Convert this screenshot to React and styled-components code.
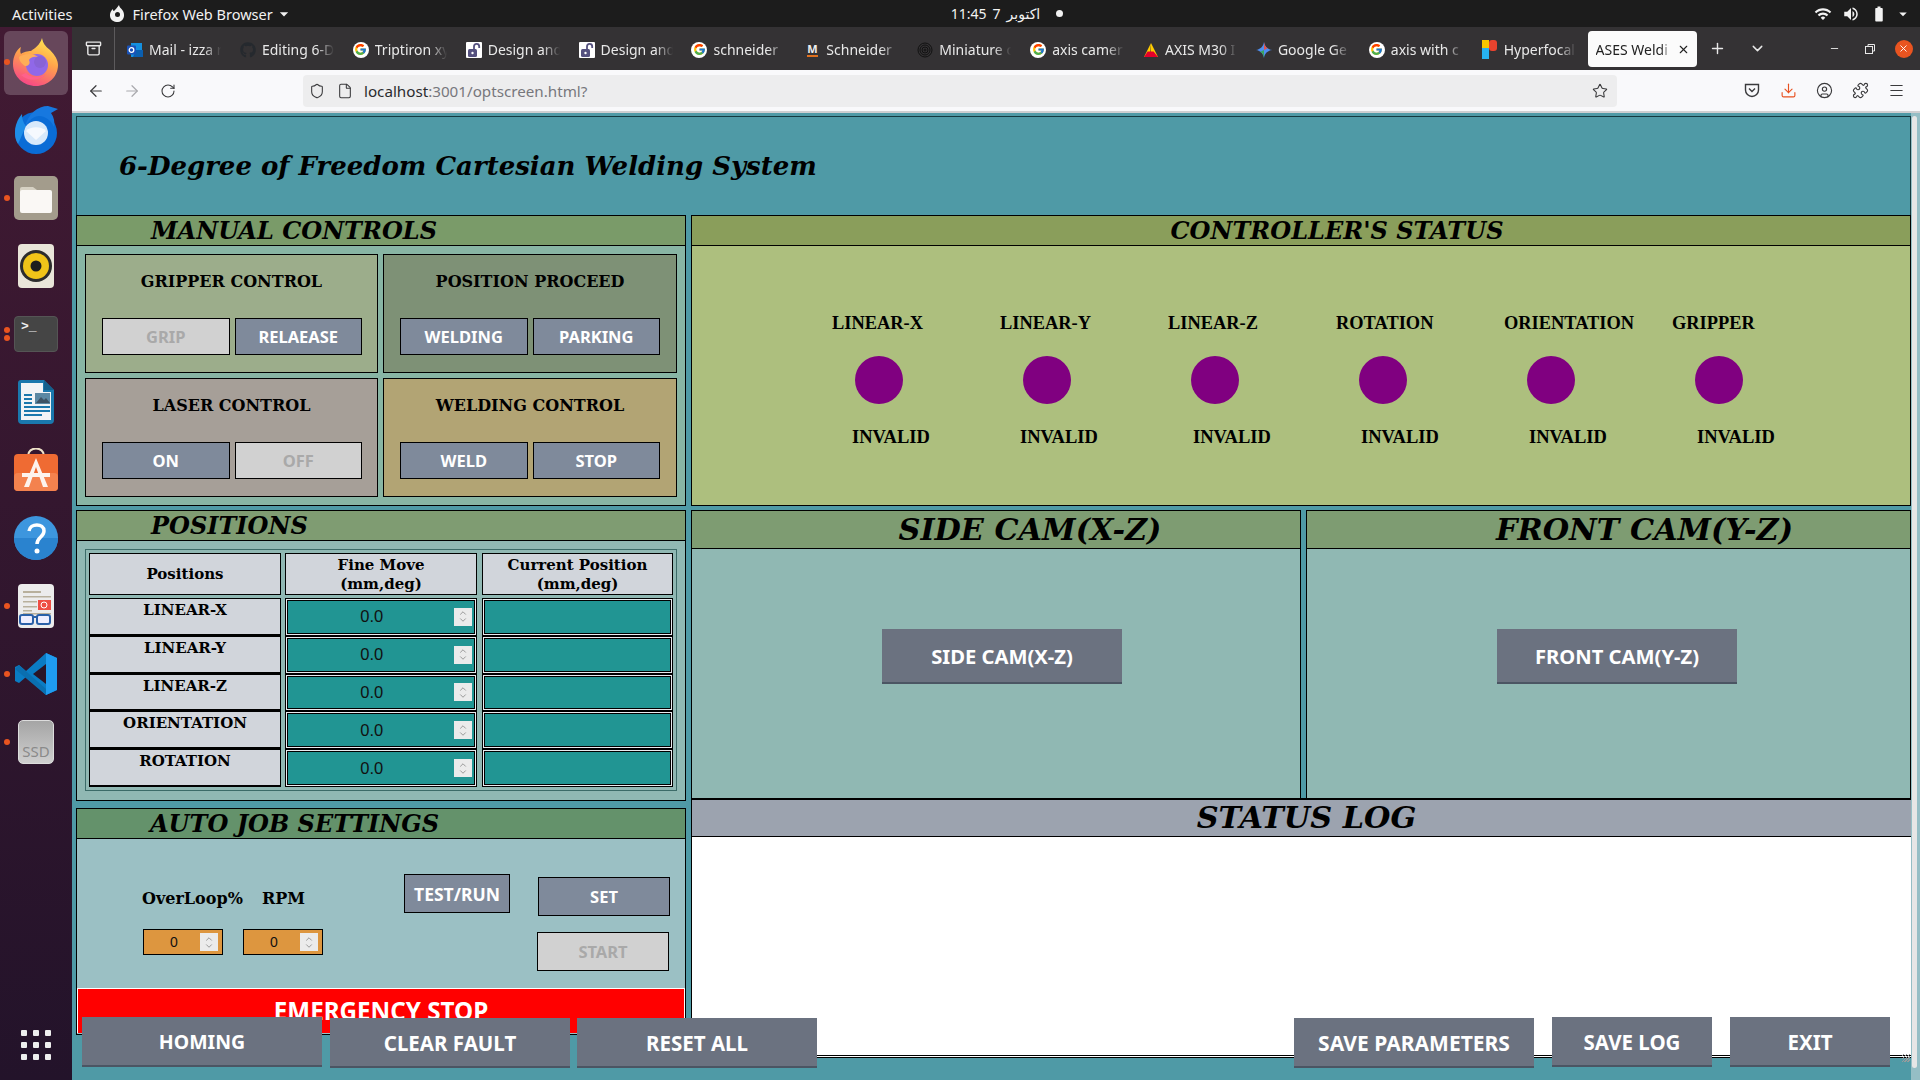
import React from "react";
import styled, { createGlobalStyle } from "styled-components";
import { ArrowLeft, ArrowRight, RotateCw, Shield, File, Star, Download, CircleUser, Puzzle, Menu, Plus, ChevronDown, ChevronUp, X, Minus, Archive } from "lucide-react";
import { FaGithub } from "react-icons/fa";
import { FcGoogle } from "react-icons/fc";
import { MdWifi, MdVolumeUp, MdBatteryStd, MdArrowDropDown } from "react-icons/md";

const SERIF = '"DejaVu Serif", serif';
const TIMES = '"Liberation Serif", serif';
const UI = '"Noto Sans", "DejaVu Sans", sans-serif';

const Global = createGlobalStyle`
  html, body { margin: 0; padding: 0; width: 1920px; height: 1080px; overflow: hidden; background: #4f9aa6; }
  * { box-sizing: border-box; }
`;

const Desktop = styled.div`display:flex;flex-direction:column;width:1920px;height:1080px;overflow:hidden;`;
const TopBar = styled.header`height:27px;background:#1c1c1c;color:#f2f2f2;font:14.5px ${UI};display:grid;grid-template-columns:1fr auto 1fr;align-items:center;padding:0 8px 0 12px;`;
const TopLeft = styled.div`display:flex;align-items:center;`;
const AppMenu = styled.div`display:flex;align-items:center;gap:6px;margin-left:37px;`;
const Clock = styled.div`display:flex;align-items:center;gap:6px;font-size:14px;margin-left:90px;`;
const ClockDot = styled.span`width:7px;height:7px;border-radius:50%;background:#f2f2f2;margin-left:10px;`;
const TopRight = styled.div`display:flex;justify-content:flex-end;align-items:center;gap:6px;`;
const Work = styled.div`display:flex;flex:1;min-height:0;`;

const Dock = styled.nav`width:72px;flex:none;background:linear-gradient(#421a33,#23132a);display:flex;flex-direction:column;padding-top:1px;padding-bottom:20px;`;
const DockSlot = styled.div`position:relative;height:68px;flex:none;display:flex;align-items:center;justify-content:center;`;
const DockTile = styled.div`position:absolute;left:4px;right:4px;top:3px;bottom:1px;border-radius:6px;background:rgba(255,255,255,.2);`;
const RunDot = styled.span`position:absolute;left:4px;top:${p => p.$top}px;width:6px;height:6px;border-radius:50%;background:#e95420;`;
const AppGrid = styled.div`margin-top:auto;align-self:center;display:grid;grid-template-columns:repeat(3,6px);grid-auto-rows:6px;gap:6px;`;
const AppGridDot = styled.span`background:#eee;border-radius:1px;`;

const Browser = styled.div`flex:1;min-width:0;display:flex;flex-direction:column;`;
const TabBar = styled.div`height:43px;flex:none;background:#343234;color:#e8e8e8;display:flex;align-items:center;font:14px ${UI};`;
const TabsButton = styled.div`width:43px;height:43px;flex:none;display:flex;align-items:center;justify-content:center;border-right:1px solid #5d5b5d;`;
const Tab = styled.div`width:112.9px;flex:none;display:flex;align-items:center;gap:6px;padding:2px 0 0 12px;white-space:nowrap;overflow:hidden;`;
const TabIcon = styled.span`width:16px;height:16px;flex:none;display:flex;align-items:center;justify-content:center;`;
const TabText = styled.span`width:76px;overflow:hidden;-webkit-mask-image:linear-gradient(90deg,#000 72%,transparent 95%);mask-image:linear-gradient(90deg,#000 72%,transparent 95%);`;
const ActiveTab = styled.div`width:109px;height:36px;margin-left:5px;flex:none;background:#fbfbfb;color:#222;border-radius:4px;display:flex;align-items:center;justify-content:space-between;padding:2px 7px 0 8px;`;
const ActiveText = styled.span`width:76px;overflow:hidden;white-space:nowrap;-webkit-mask-image:linear-gradient(90deg,#000 85%,transparent);mask-image:linear-gradient(90deg,#000 85%,transparent);`;
const TabTool = styled.div`display:flex;align-items:center;justify-content:center;width:${p => p.$w}px;margin-left:${p => p.$ml || 0}px;`;
const CloseCircle = styled.span`width:18px;height:18px;border-radius:50%;background:#e95420;display:flex;align-items:center;justify-content:center;margin-left:15px;`;

const NavBar = styled.div`height:41px;flex:none;background:#f9f9fb;display:flex;align-items:center;color:#3a3a3c;`;
const NavBtn = styled.div`width:36px;display:flex;justify-content:center;color:${p => p.$c || "#3a3a3c"};`;
const UrlBar = styled.div`margin-left:117px;width:1314px;height:32px;background:#ededee;border-radius:4px;display:flex;align-items:center;padding:0 8px 0 6px;font:15.2px ${UI};`;
const UrlIcon = styled.span`display:flex;margin-right:${p => p.$mr}px;`;
const UrlHost = styled.span`color:#2b2b2f;`;
const UrlRest = styled.span`color:#77777c;flex:1;`;
const NavEnd = styled.div`display:flex;margin-left:117px;`;

const Page = styled.main`position:relative;flex:1;min-height:0;overflow:hidden;background:#4f9aa6;border-top:2px solid #cfcfd1;padding:3px 9px 0 4px;`;
const Banner = styled.div`height:99px;border:1px solid #153a40;border-bottom:0;display:flex;align-items:center;padding:0 0 0 42px;`;
const Title = styled.h1`margin:0;font:italic 700 26px ${SERIF};color:#000;`;
const Columns = styled.div`display:grid;grid-template-columns:610px 1fr;column-gap:5px;`;
const Column = styled.div`display:flex;flex-direction:column;`;
const Panel = styled.section`border:1px solid #000;height:${p => p.$h}px;margin-top:${p => p.$mt || 0}px;background:${p => p.$bg};display:flex;flex-direction:column;overflow:hidden;`;
const PanelHead = styled.h2`margin:0;flex:none;height:${p => p.$h || 30}px;background:${p => p.$bg};border-bottom:1px solid #000;font:italic 700 ${p => p.$size || 24}px/${p => (p.$h || 30) - 1}px ${SERIF};color:#000;text-align:${p => p.$center ? "center" : "left"};padding-left:${p => p.$pl || 0}px;white-space:nowrap;`;

const ManualBody = styled.div`flex:1;display:grid;grid-template-columns:293px 294px;grid-auto-rows:119px;gap:5px;padding:8px 0 0 8px;`;
const Group = styled.div`border:1px solid #000;background:${p => p.$bg};padding:15px 16px 0;`;
const GroupTitle = styled.div`font:700 16px/24px ${SERIF};color:#000;text-align:center;margin-bottom:24px;white-space:nowrap;`;
const BtnRow = styled.div`display:grid;grid-template-columns:127.5px 127.5px;gap:5px;`;
const Btn = styled.button`display:block;padding:0;margin:${p => p.$m || 0};width:${p => p.$w ? p.$w + "px" : "100%"};height:${p => p.$h || 37}px;border:1px solid #000;background:${p => p.$off ? "#d1d1d1" : "#7f8a9b"};color:${p => p.$off ? "#a9a9a9" : "#fff"};font:700 ${p => p.$size || 16.5}px ${UI};text-transform:uppercase;`;

const PosBody = styled.div`flex:1;padding:8px 0 0 8px;`;
const PosTable = styled.div`width:592px;height:242px;border:1px solid #3c6b68;padding:3px;display:grid;grid-template-columns:192px 193px 191px;column-gap:4px;grid-template-rows:42px repeat(5,37.8px);`;
const HeadCell = styled.div`border:1px solid #000;background:#d1d5db;height:42px;padding-top:1px;margin-right:${p => p.$mid ? 1 : 0}px;font:700 15px/19px ${SERIF};color:#000;text-align:center;display:flex;align-items:center;justify-content:center;`;
const RowLabel = styled.div`border:1px solid #000;border-bottom-width:2px;background:#d1d5db;font:700 15px/22px ${SERIF};color:#000;text-align:center;transform:translateY(3px);`;
const ValueCell = styled.div`border:1px solid #000;background:#e8eaee;padding:1px;margin-right:${p => p.$mid ? 1 : 0}px;transform:translateY(3px);`;
const TealField = styled.div`height:100%;border:1px solid #000;background:#219593;display:flex;align-items:center;font:16.5px "Liberation Sans",sans-serif;color:#111;`;
const FieldValue = styled.span`flex:1;text-align:center;padding-left:${p => p.$pl}px;`;
const Spin = styled.span`width:18px;height:18px;background:#ebebeb;display:flex;flex-direction:column;align-items:center;justify-content:center;margin-right:${p => p.$mr}px;color:#9a9a9a;flex:none;`;
const SpinGlyph = styled.span`display:flex;height:7px;align-items:center;`;

const AutoBody = styled.div`height:148px;flex:none;background:#9bc0c4;display:flex;align-items:flex-start;padding-left:66px;`;
const AutoFields = styled.div`width:261px;padding-top:50px;`;
const AutoLabels = styled.div`display:flex;font:700 16px/20px ${SERIF};color:#000;height:20px;margin-left:-1px;`;
const AutoLabel = styled.span`width:${p => p.$w}px;`;
const AutoInputs = styled.div`display:flex;gap:20px;margin-top:20px;`;
const OrangeField = styled.div`width:80px;height:26px;border:1px solid #000;background:#dd963f;display:flex;align-items:center;font:14px "Liberation Sans",sans-serif;color:#111;`;
const AutoAction = styled.div`display:flex;flex-direction:column;margin-left:28px;padding-top:38px;`;
const Emergency = styled.button`flex:none;height:45px;margin:1px 0 0;padding:0 0 2px;width:auto;border:1px solid #fff;border-bottom:0;background:#f00;color:#fff;font:700 24.2px ${UI};`;

const Leds = styled.div`flex:1;display:flex;padding:67px 0 0 140px;`;
const Led = styled.div`width:168px;flex:none;display:flex;flex-direction:column;`;
const LedLabel = styled.span`font:700 18.4px/20px ${TIMES};color:#000;height:20px;white-space:nowrap;`;
const LedDot = styled.span`width:48px;height:48px;border-radius:50%;background:#800080;margin:23px 0 23px 23px;`;
const LedState = styled.span`font:700 18.5px/20px ${TIMES};color:#000;margin-left:${p => p.$ml}px;`;

const CamRow = styled.div`display:grid;grid-template-columns:610px 605px;column-gap:5px;height:288px;margin-top:4px;`;
const Cam = styled.section`border:1px solid #000;border-bottom:0;background:#90b8b3;display:flex;flex-direction:column;`;
const CamBody = styled.div`flex:1;display:flex;align-items:flex-start;padding:80px 0 0 ${p => p.$pl}px;`;
const BigBtn = styled.button`width:${p => p.$w}px;height:${p => p.$h}px;padding:1px 0 0;border:0;border-bottom:2px solid #4b5563;background:#6b7280;color:#fff;font:700 ${p => p.$size}px ${UI};margin-top:${p => p.$mt || 0}px;margin-left:${p => p.$ml || 0}px;flex:none;`;
const Log = styled.section`border-top:2px solid #000;border-left:1px solid #000;height:260px;display:flex;flex-direction:column;background:#fff;border-bottom:3px double #000;`;
const LogHead = styled.h2`margin:0;flex:none;height:37px;background:#9ca3af;border-bottom:1px solid #000;font:italic 700 30.3px/35px ${SERIF};color:#000;text-align:center;padding-left:10px;`;
const LogBody = styled.div`flex:1;background:#fff;`;

const Overlay = styled.div`position:absolute;left:10px;right:30px;top:904px;display:flex;`;
const Spacer = styled.div`flex:1;`;
const ScrollTrack = styled.div`position:absolute;right:0;top:0;bottom:0;width:9px;background:rgba(235,235,235,.45);`;
const ScrollThumb = styled.div`position:absolute;left:1px;right:3px;top:3px;bottom:12px;background:#e6e6e6;border-radius:3px;`;
const Grip = styled.div`position:absolute;right:10px;top:941px;width:8px;height:8px;background:repeating-linear-gradient(135deg,transparent 0 1px,#9a9a9a 1px 2px);`;
const GoogleBadge = styled.span`display:flex;background:#fff;border-radius:50%;width:16px;height:16px;align-items:center;justify-content:center;`;
const TopGlyph = styled.span`display:flex;margin-left:${p => p.$ml || 0}px;`;
const CaretNudge = styled.span`display:flex;margin-left:-5px;`;
const NavLead = styled.span`width:6px;flex:none;`;

const G = () => <GoogleBadge><FcGoogle size={13} /></GoogleBadge>;
const Outlook = () => <svg width="16" height="16" viewBox="0 0 16 16"><path d="M4 1h11v14H4z" fill="#1490df" /><path d="M9 8h7v7H6z" fill="#0a5fb0" /><rect y="3.5" width="9" height="9" rx="1" fill="#1a52b8" /><circle cx="4.5" cy="8" r="2.3" fill="none" stroke="#fff" strokeWidth="1.3" /></svg>;
const Lock = () => <svg width="16" height="16" viewBox="0 0 16 16"><rect width="16" height="16" rx="1" fill="#fff" /><rect x="2" y="7" width="9" height="8" rx="1.5" fill="#55517f" /><path d="M8 7V4.5a2.6 2.6 0 0 1 5.2 0V6" fill="none" stroke="#55517f" strokeWidth="1.8" /><circle cx="6.5" cy="11" r="1.2" fill="#fff" /></svg>;
const Spiral = () => <svg width="16" height="16" viewBox="0 0 16 16" fill="none" stroke="#111" strokeWidth="1"><circle cx="8" cy="8" r="7" /><circle cx="8" cy="8" r="5" /><circle cx="8" cy="8" r="3" /><circle cx="8" cy="8" r="1" /></svg>;
const Axis = () => <svg width="16" height="16" viewBox="0 0 16 16"><path d="M8 1l7 14H9.5L8 11z" fill="#ffcc00" /><path d="M8 1L1 15h6z" fill="#ffcc00" /><path d="M4.6 9.5h6L15 15H1z" fill="#e3002b" /></svg>;
const Gemini = () => <svg width="16" height="16" viewBox="0 0 16 16"><path d="M8 0c.6 4.4 3.6 7.4 8 8-4.4.6-7.4 3.6-8 8-.6-4.4-3.6-7.4-8-8 4.4-.6 7.4-3.6 8-8z" fill="#4f8ef0" /><path d="M8 0c.5 4 2.500 6 4 6L8 8z" fill="#e5534b" /><path d="M8 16c-.5-4-2.500-6-4-6l4-2z" fill="#3ba55d" /></svg>;
const Hyper = () => <svg width="16" height="20" viewBox="0 0 16 20"><rect x="0" width="7" height="8" fill="#f7c600" /><rect x="7" width="8" height="11" rx="3" fill="#e8432e" /><rect x="0" y="8" width="7" height="12" fill="#27b2f0" /></svg>;
const SchneiderM = styled.span`font:700 11px ${UI};color:#eee;line-height:12px;border-bottom:2px solid #e0701e;`;

const tabs = [
  [<Outlook />, "Mail - izza r"],
  [<FaGithub size={16} color="#25292e" />, "Editing 6-D"],
  [<G />, "Triptiron xy"],
  [<Lock />, "Design and"],
  [<Lock />, "Design and"],
  [<G />, "schneider"],
  [<SchneiderM>M</SchneiderM>, "Schneider"],
  [<Spiral />, "Miniature c"],
  [<G />, "axis camer"],
  [<Axis />, "AXIS M30 I"],
  [<Gemini />, "Google Ge"],
  [<G />, "axis with c"],
  [<Hyper />, "Hyperfocal"],
];

const Firefox = () => <svg width="48" height="48" viewBox="0 0 48 48"><defs><linearGradient id="ff1" x1="0.7" y1="0" x2="0.3" y2="1"><stop offset="0" stopColor="#ffe226" /><stop offset=".45" stopColor="#ff8a1f" /><stop offset="1" stopColor="#f5156c" /></linearGradient></defs><path d="M30 0c1 5 3 8 8 12 5 5 8 10 8 15 0 12-10 21-22 21S1 39 1 26C1 18 5 11 9 9c-1 3-1 5 0 7 2-2 7-3 10-3 4-3 9-6 11-13z" fill="url(#ff1)" /><circle cx="25" cy="27" r="11" fill="#7543e3" /><circle cx="28" cy="24" r="6" fill="#6b3dcc" /><path d="M7 19c4-3 14-5 19 0-5-1-8 1-9 3 2 4-1 6-4 6-3-2-6-5-6-9z" fill="#ff9a2e" /><path d="M14 35c4 5 14 5 20 1-6 7-18 8-25 1 2-1 3-1 5-2z" fill="#ff3a6e" /></svg>;
const Thunder = () => <svg width="48" height="48" viewBox="0 0 48 48"><circle cx="24" cy="27" r="21" fill="#0a6cd6" /><path d="M10 8C5 14 3 20 3 27c0 4 1 8 3 11l8-18C11 17 10 12 10 8z" fill="#1f8ee8" /><path d="M13 22C15 8 26 0 36 0l10 3-7 4c3 4 4 9 3 14-3-7-9-11-15-11-6 0-11 5-14 12z" fill="#1778df" /><circle cx="24" cy="27" r="12" fill="#d7e9fb" /><path d="M14 25c4-5 16-5 20 0l-10 9z" fill="#f5f9fe" /></svg>;
const Files = () => <svg width="44" height="44" viewBox="0 0 44 44"><rect width="44" height="44" rx="5" fill="#a39c8c" /><path d="M6 13a2 2 0 0 1 2-2h11l4 3v4H6z" fill="#d6d1c3" /><rect x="6" y="14" width="32" height="23" rx="2" fill="#faf8f5" /></svg>;
const Rhythm = () => <svg width="36" height="44" viewBox="0 0 36 44"><rect width="36" height="44" rx="4" fill="#e9e5d9" /><circle cx="18" cy="22" r="16" fill="#2c2c2c" /><circle cx="18" cy="22" r="13" fill="#f0c419" /><circle cx="18" cy="22" r="5.500" fill="#1e1e1e" /></svg>;
const TermPrompt = styled.span`position:absolute;left:6px;top:2px;font:700 13px "Liberation Mono",monospace;color:#eee;`;
const TermBox = styled.div`position:relative;width:44px;height:36px;border-radius:4px;background:#454545;border:1px solid #555;`;
const Writer = () => <svg width="36" height="44" viewBox="0 0 36 44"><path d="M3 0h23l10 10v30a4 4 0 0 1-4 4H4a4 4 0 0 1-4-4V3a3 3 0 0 1 3-3z" fill="#1a78ad" /><path d="M3 3h22v9h8v28H3z" fill="#f2f4f6" /><path d="M26 0l10 10H26z" fill="#135f8b" /><path d="M6 14h8v2H6zM6 18h8v2H6zM6 22h8v2H6zM6 26h26v2H6zM6 30h26v2H6zM6 34h18v2H6z" fill="#1a78ad" /><rect x="17" y="13" width="15" height="11" fill="#5b88a3" /><path d="M18 23l5-6 3 3 2-2 4 5z" fill="#3e5364" /></svg>;
const Store = () => <svg width="44" height="44" viewBox="0 0 44 44"><path d="M14 8c0-10 16-10 16 0" fill="none" stroke="#eee2c8" strokeWidth="2" /><rect y="6" width="44" height="37" rx="4" fill="#ef6b33" /><rect y="25" width="44" height="18" rx="4" fill="#f4824e" /><path d="M22 10l-12 29h5l7-20 7 20h5z" fill="#fdf3ed" /><rect x="8" y="25" width="28" height="4" fill="#fdf3ed" /></svg>;
const Help = () => <svg width="44" height="44" viewBox="0 0 44 44"><circle cx="22" cy="22" r="22" fill="#3d96de" /><path d="M0 22a22 22 0 0 0 44 0z" fill="#2a83cf" /><path d="M15 15c1-8 15-8 15 0 0 6-7 6-7 13" fill="none" stroke="#fff" strokeWidth="3.500" /><circle cx="23" cy="35" r="2.500" fill="#fff" /></svg>;
const Reader = () => <svg width="36" height="44" viewBox="0 0 36 44"><rect width="36" height="44" rx="4" fill="#ececec" /><path d="M5 7h18v2H5zM5 12h28v1.500H5zM5 17h14v1.500H5zM5 22h14v1.500H5zM5 26h9v1.500H5zM5 29h28v1.500H5z" fill="#b8b09c" /><rect x="20" y="16" width="13" height="10" fill="#ee4d43" /><circle cx="26" cy="21" r="3" fill="none" stroke="#fff" /><rect x="2" y="31" width="13" height="9" rx="2" fill="#eef" stroke="#2a60a8" strokeWidth="2" /><rect x="19" y="31" width="13" height="9" rx="2" fill="#eef" stroke="#2a60a8" strokeWidth="2" /><path d="M15 33h4" stroke="#2a60a8" strokeWidth="2" /></svg>;
const VSCode = () => <svg width="42" height="42" viewBox="0 0 42 42"><path d="M31 0l11 5v32l-11 5-20-18-7 6-4-2v-14l4-2 7 6z" fill="#0a7cc4" /><path d="M31 0l11 5v32l-11 5z" fill="#1f9cf0" /><path d="M31 11L18 21l13 10z" fill="#2a1527" /><path d="M4 12l27 24v6L0 16z" fill="#0a6fb0" /></svg>;
const SsdBox = styled.div`width:36px;height:44px;border-radius:5px;background:linear-gradient(#a5a5a5,#cfcfcf);border:1px solid #ddd;display:flex;align-items:flex-end;justify-content:center;font:15px ${UI};color:#8a8a8a;padding-bottom:2px;`;

const dock = [
  { el: <Firefox />, tile: true, dots: [31] },
  { el: <Thunder /> },
  { el: <Files />, dots: [31] },
  { el: <Rhythm /> },
  { el: <TermBox><TermPrompt>&gt;_</TermPrompt></TermBox>, dots: [27, 35] },
  { el: <Writer /> },
  { el: <Store /> },
  { el: <Help /> },
  { el: <Reader />, dots: [31] },
  { el: <VSCode />, dots: [31] },
  { el: <SsdBox>SSD</SsdBox>, dots: [31] },
];

const SpinBox = ({ mr }) => (
  <Spin $mr={mr}>
    <SpinGlyph><ChevronUp size={10} strokeWidth={2.4} /></SpinGlyph>
    <SpinGlyph><ChevronDown size={10} strokeWidth={2.4} /></SpinGlyph>
  </Spin>
);

const groups = [
  ["GRIPPER CONTROL", "#9cad8b", ["Grip", true], ["Relaease", false]],
  ["POSITION PROCEED", "#7e9176", ["Welding", false], ["Parking", false]],
  ["LASER CONTROL", "#a69f98", ["On", false], ["Off", true]],
  ["WELDING CONTROL", "#b2a474", ["Weld", false], ["Stop", false]],
];
const rows = ["LINEAR-X", "LINEAR-Y", "LINEAR-Z", "ORIENTATION", "ROTATION"];
const leds = [["LINEAR-X", 20], ["LINEAR-Y", 20], ["LINEAR-Z", 25], ["ROTATION", 25], ["ORIENTATION", 25], ["GRIPPER", 25]];
const bar = 20.5;

export default function App() {
  return (
    <Desktop>
      <Global />
      <TopBar>
        <TopLeft>
          Activities
          <AppMenu>
            <svg width="17" height="17" viewBox="0 0 17 17"><path d="M10 0c0 2 2 3 4 6 2 4 1 8-2 10-3 2-8 1-10-2C0 11 1 6 4 4c0 1 0 2 1 2 1-1 3-3 5-6z" fill="#f2f2f2" /><circle cx="8.500" cy="9.500" r="2.500" fill="#1c1c1c" /></svg>
            Firefox Web Browser
            <CaretNudge><MdArrowDropDown size={20} /></CaretNudge>
          </AppMenu>
        </TopLeft>
        <Clock>
          <span>11:45</span><span>7</span><span>اکتوبر</span>
          <ClockDot />
        </Clock>
        <TopRight>
          <MdWifi size={18} /><TopGlyph $ml={4}><MdVolumeUp size={18} /></TopGlyph><TopGlyph $ml={4}><MdBatteryStd size={18} /></TopGlyph><MdArrowDropDown size={18} />
        </TopRight>
      </TopBar>
      <Work>
        <Dock>
          {dock.map((d, i) => (
            <DockSlot key={i}>
              {d.tile && <DockTile />}
              {(d.dots || []).map(t => <RunDot key={t} $top={t} />)}
              {d.el}
            </DockSlot>
          ))}
          <AppGrid>{Array.from({ length: 9 }, (_, i) => <AppGridDot key={i} />)}</AppGrid>
        </Dock>
        <Browser>
          <TabBar>
            <TabsButton><Archive size={17} color="#e8e8e8" /></TabsButton>
            {tabs.map(([icon, label], i) => (
              <Tab key={i}><TabIcon>{icon}</TabIcon><TabText>{label}</TabText></Tab>
            ))}
            <ActiveTab><ActiveText>ASES Weldi</ActiveText><X size={13} /></ActiveTab>
            <TabTool $w={28} $ml={7}><Plus size={17} /></TabTool>
            <TabTool $w={28} $ml={12}><ChevronDown size={17} /></TabTool>
            <TabTool $w={20} $ml={53}><Minus size={11} /></TabTool>
            <TabTool $w={20} $ml={15}><svg width="10" height="10" viewBox="0 0 10 10" fill="none" stroke="#e8e8e8"><rect x=".5" y="2.500" width="7" height="7" /><path d="M3 2.500V.5h6.500V7H8" /></svg></TabTool>
            <CloseCircle><X size={11} color="#fff" /></CloseCircle>
          </TabBar>
          <NavBar>
            <NavLead />
            <NavBtn><ArrowLeft size={18} strokeWidth={1.6} /></NavBtn>
            <NavBtn $c="#a9a9ad"><ArrowRight size={18} strokeWidth={1.6} /></NavBtn>
            <NavBtn><RotateCw size={16} strokeWidth={1.6} /></NavBtn>
            <UrlBar>
              <UrlIcon $mr={12}><Shield size={16} strokeWidth={1.6} /></UrlIcon>
              <UrlIcon $mr={11}><File size={16} strokeWidth={1.6} /></UrlIcon>
              <UrlHost>localhost</UrlHost><UrlRest>:3001/optscreen.html?</UrlRest>
              <UrlIcon $mr={1}><Star size={16} strokeWidth={1.6} /></UrlIcon>
            </UrlBar>
            <NavEnd>
              <NavBtn><svg width="16" height="16" viewBox="0 0 16 16" fill="none" stroke="#3a3a3c" strokeWidth="1.4"><path d="M1.500 2.500h13V8a6.500 6.500 0 0 1-13 0z" /><path d="M5 6.500l3 3 3-3" /></svg></NavBtn>
              <NavBtn $c="#e8501f"><Download size={17} strokeWidth={1.6} /></NavBtn>
              <NavBtn><CircleUser size={17} strokeWidth={1.6} /></NavBtn>
              <NavBtn><Puzzle size={17} strokeWidth={1.6} /></NavBtn>
              <NavBtn><Menu size={17} strokeWidth={1.6} /></NavBtn>
            </NavEnd>
          </NavBar>
          <Page>
            <Banner><Title>6-Degree of Freedom Cartesian Welding System</Title></Banner>
            <Columns>
              <Column>
                <Panel $h={291} $bg="#88b5a4">
                  <PanelHead $bg="#7a9b69" $pl={74}>MANUAL CONTROLS</PanelHead>
                  <ManualBody>
                    {groups.map(([title, bg, a, b]) => (
                      <Group key={title} $bg={bg}>
                        <GroupTitle>{title}</GroupTitle>
                        <BtnRow>
                          <Btn $off={a[1]}>{a[0]}</Btn>
                          <Btn $off={b[1]}>{b[0]}</Btn>
                        </BtnRow>
                      </Group>
                    ))}
                  </ManualBody>
                </Panel>
                <Panel $h={291} $mt={4} $bg="#90b8b3">
                  <PanelHead $bg="#7f9c72" $pl={74}>POSITIONS</PanelHead>
                  <PosBody>
                    <PosTable>
                      <HeadCell>Positions</HeadCell>
                      <HeadCell $mid>Fine Move<br />(mm,deg)</HeadCell>
                      <HeadCell>Current Position<br />(mm,deg)</HeadCell>
                      {rows.map(r => (
                        <React.Fragment key={r}>
                          <RowLabel>{r}</RowLabel>
                          <ValueCell $mid><TealField><FieldValue $pl={1.5}>0.0</FieldValue><SpinBox mr={2} /></TealField></ValueCell>
                          <ValueCell><TealField /></ValueCell>
                        </React.Fragment>
                      ))}
                    </PosTable>
                  </PosBody>
                </Panel>
                <Panel $h={227} $mt={7} $bg="#9bc0c4">
                  <PanelHead $bg="#64926b" $pl={73}>AUTO JOB SETTINGS</PanelHead>
                  <AutoBody>
                    <AutoFields>
                      <AutoLabels><AutoLabel $w={120}>OverLoop%</AutoLabel><AutoLabel $w={60}>RPM</AutoLabel></AutoLabels>
                      <AutoInputs>
                        <OrangeField><FieldValue $pl={4}>0</FieldValue><SpinBox mr={4} /></OrangeField>
                        <OrangeField><FieldValue $pl={4}>0</FieldValue><SpinBox mr={4} /></OrangeField>
                      </AutoInputs>
                    </AutoFields>
                    <Btn $w={106} $h={39} $size={17.5} $m="35px 0 0">Test/Run</Btn>
                    <AutoAction>
                      <Btn $w={132} $h={39}>Set</Btn>
                      <Btn $w={132} $h={39} $off $m="16px 0 0 -1px">Start</Btn>
                    </AutoAction>
                  </AutoBody>
                  <Emergency>EMERGENCY STOP</Emergency>
                </Panel>
              </Column>
              <Column>
                <Panel $h={291} $bg="#adbf7e">
                  <PanelHead $bg="#8a9e5b" $center $pl={72}>CONTROLLER'S STATUS</PanelHead>
                  <Leds>
                    {leds.map(([n, ml]) => (
                      <Led key={n}>
                        <LedLabel>{n}</LedLabel>
                        <LedDot />
                        <LedState $ml={ml}>INVALID</LedState>
                      </Led>
                    ))}
                  </Leds>
                </Panel>
                <CamRow>
                  <Cam>
                    <PanelHead $h={38} $size={30.3} $bg="#7e9c72" $center $pl={68}>SIDE CAM(X-Z)</PanelHead>
                    <CamBody $pl={190}><BigBtn $w={240} $h={55} $size={20.2}>SIDE CAM(X-Z)</BigBtn></CamBody>
                  </Cam>
                  <Cam>
                    <PanelHead $h={38} $size={30.3} $bg="#7e9c72" $center $pl={72}>FRONT CAM(Y-Z)</PanelHead>
                    <CamBody $pl={190}><BigBtn $w={240} $h={55} $size={20.2}>FRONT CAM(Y-Z)</BigBtn></CamBody>
                  </Cam>
                </CamRow>
                <Log>
                  <LogHead>STATUS LOG</LogHead>
                  <LogBody />
                </Log>
              </Column>
            </Columns>
            <Overlay>
              <BigBtn $w={240} $h={50} $size={19.5}>HOMING</BigBtn>
              <BigBtn $w={240} $h={50} $size={bar} $ml={8} $mt={1}>CLEAR FAULT</BigBtn>
              <BigBtn $w={240} $h={50} $size={bar} $ml={7} $mt={1}>RESET ALL</BigBtn>
              <Spacer />
              <BigBtn $w={240} $h={50} $size={21} $mt={1}>SAVE PARAMETERS</BigBtn>
              <BigBtn $w={160} $h={50} $size={bar} $ml={18}>SAVE LOG</BigBtn>
              <BigBtn $w={160} $h={50} $size={bar} $ml={18}>EXIT</BigBtn>
            </Overlay>
            <Grip />
            <ScrollTrack><ScrollThumb /></ScrollTrack>
          </Page>
        </Browser>
      </Work>
    </Desktop>
  );
}
